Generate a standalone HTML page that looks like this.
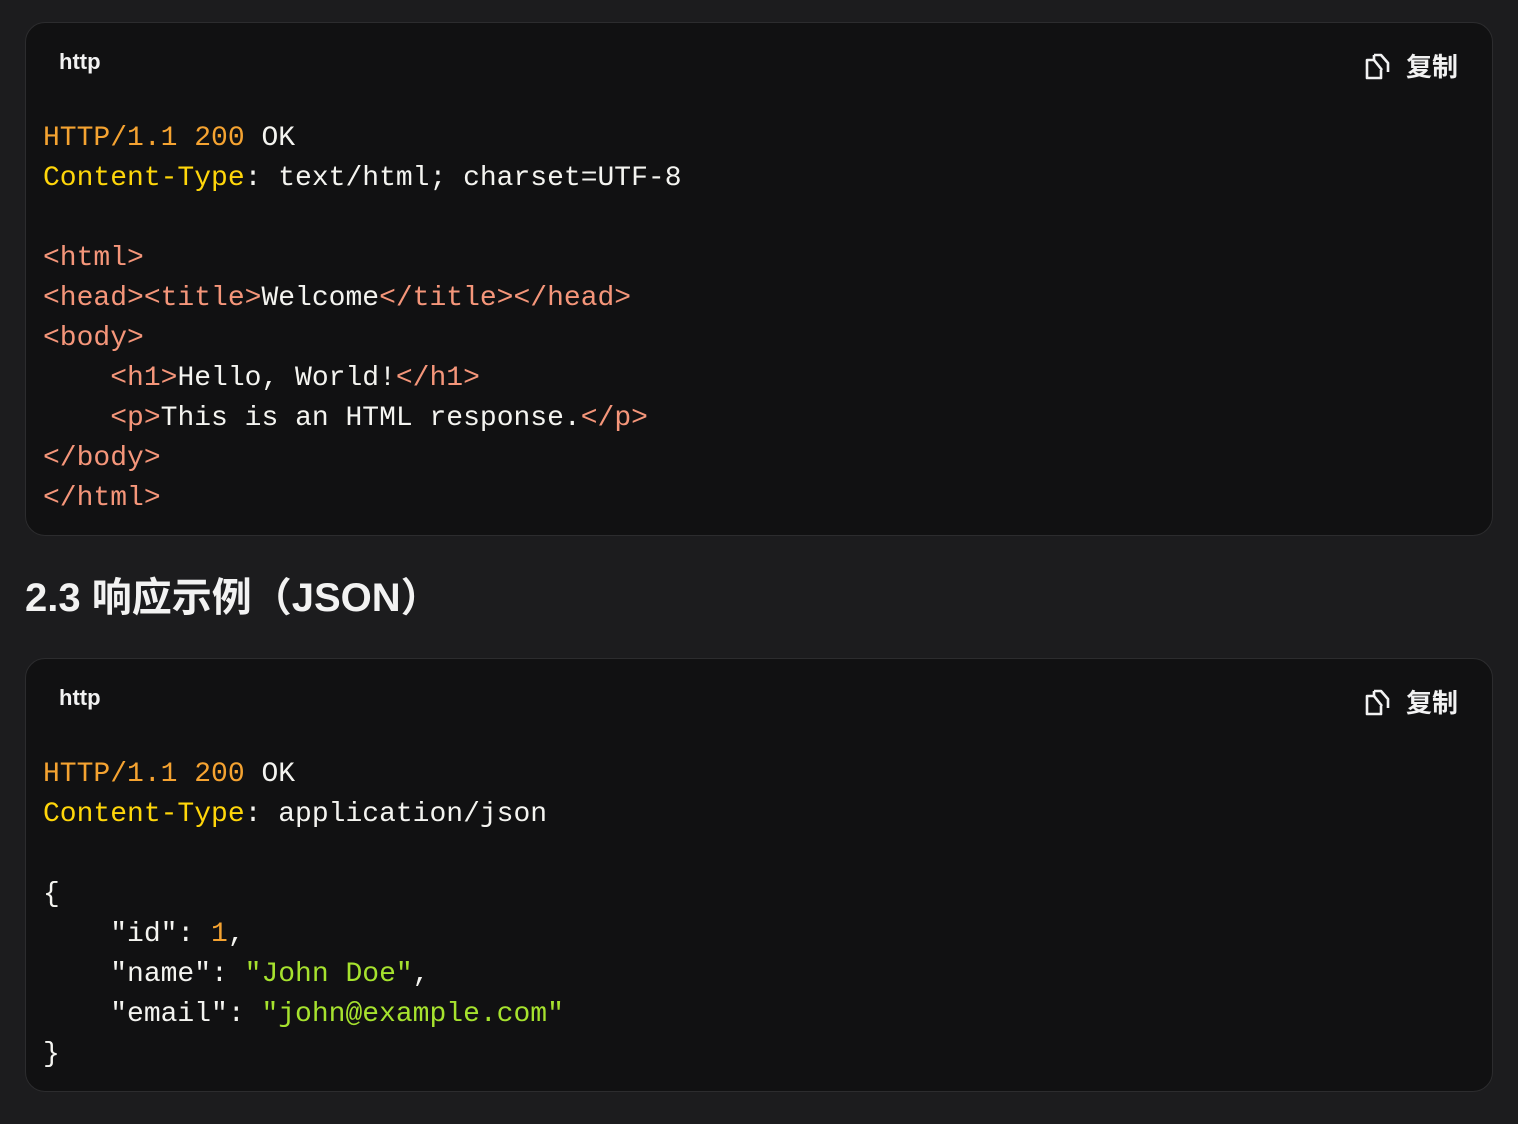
<!DOCTYPE html>
<html><head><meta charset="utf-8"><style>
body{margin:0;background:#1c1c1e;width:1518px;height:1124px;overflow:hidden;font-family:"Liberation Sans","Noto Sans CJK SC",sans-serif;}
.card{position:absolute;left:25px;width:1468px;background:#111112;border:1px solid #2c2c2e;border-radius:20px;box-sizing:border-box;}
.lang{position:absolute;left:33px;top:26px;font-size:22px;font-weight:bold;color:#f2f2f2;}
.copy{position:absolute;right:34px;top:24px;display:flex;align-items:center;gap:12px;color:#f2f2f2;font-size:26px;font-weight:bold;font-family:"Noto Sans CJK SC",sans-serif;}
pre{position:absolute;left:17px;margin:0;font-family:"Liberation Mono",monospace;font-size:28px;line-height:40px;color:#f4f4f0;}
.o{color:#f5a331}.y{color:#ffd60a}.t{color:#f5967a}.g{color:#a6e22e}
h2{position:absolute;left:25px;top:570px;margin:0;font-size:40px;line-height:56px;color:#f2f2f2;font-weight:bold;font-family:"Liberation Sans","Noto Sans CJK SC",sans-serif;}
</style></head><body>
<div class="card" style="top:22px;height:514px">
<div class="lang">http</div>
<div class="copy"><svg width="30" height="30" viewBox="0 0 30 30" fill="none" stroke="#f2f2f2" stroke-width="2.6" stroke-linejoin="round"><path d="M10 9H3v18h14v-8"/><path d="M10 9l8 10"/><path d="M10 4h7l7 8v9"/><path d="M10 4v5"/></svg><span>复制</span></div>
<pre style="top:96px"><span class="o">HTTP/1.1 200</span> OK
<span class="y">Content-Type</span>: text/html; charset=UTF-8

<span class="t">&lt;html&gt;</span>
<span class="t">&lt;head&gt;&lt;title&gt;</span>Welcome<span class="t">&lt;/title&gt;&lt;/head&gt;</span>
<span class="t">&lt;body&gt;</span>
    <span class="t">&lt;h1&gt;</span>Hello, World!<span class="t">&lt;/h1&gt;</span>
    <span class="t">&lt;p&gt;</span>This is an HTML response.<span class="t">&lt;/p&gt;</span>
<span class="t">&lt;/body&gt;</span>
<span class="t">&lt;/html&gt;</span></pre>
</div>
<h2>2.3 响应示例（JSON）</h2>
<div class="card" style="top:658px;height:434px">
<div class="lang">http</div>
<div class="copy"><svg width="30" height="30" viewBox="0 0 30 30" fill="none" stroke="#f2f2f2" stroke-width="2.6" stroke-linejoin="round"><path d="M10 9H3v18h14v-8"/><path d="M10 9l8 10"/><path d="M10 4h7l7 8v9"/><path d="M10 4v5"/></svg><span>复制</span></div>
<pre style="top:96px"><span class="o">HTTP/1.1 200</span> OK
<span class="y">Content-Type</span>: application/json

{
    "id": <span class="o">1</span>,
    "name": <span class="g">"John Doe"</span>,
    "email": <span class="g">"john@example.com"</span>
}</pre>
</div>
</body></html>
